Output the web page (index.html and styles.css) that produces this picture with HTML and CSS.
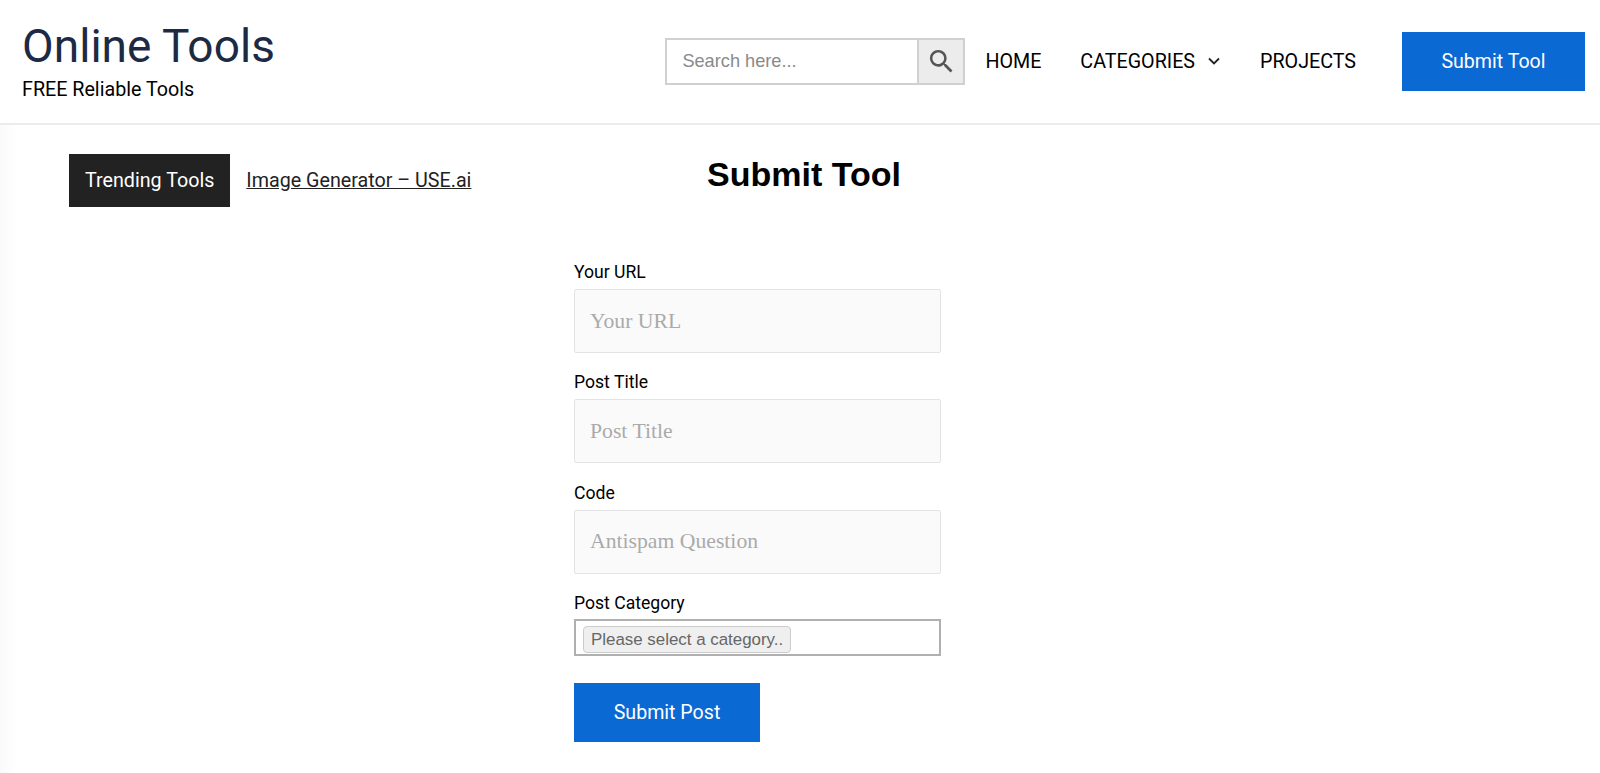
FILE: index.html
```html
<html>
  <head>
    <link rel="stylesheet" href="styles.css">
  </head>
  <body>
    <header class="site-header">
      <div class="brand">
        <div class="brand-title">Online Tools</div>
        <div class="brand-tagline">FREE Reliable Tools</div>
      </div>
      <nav class="nav">
        <form class="search">
          <input type="text" class="search-input" placeholder="Search here..." />
          <button type="button" class="search-button">
            <svg width="31" height="31" viewBox="0 0 24 24" fill="#555"><path d="M15.5 14h-.79l-.28-.27A6.47 6.47 0 0 0 16 9.5 6.5 6.5 0 1 0 9.5 16c1.61 0 3.09-.59 4.23-1.57l.27.28v.79l5 4.99L20.49 19l-4.99-5zm-6 0C7.01 14 5 11.99 5 9.5S7.01 5 9.5 5 14 7.01 14 9.5 11.99 14 9.5 14z"/></svg>
          </button>
        </form>
        <a class="nav-link" href="#">HOME</a>
        <a class="nav-link nav-categories" href="#">CATEGORIES
          <svg width="12" height="8" viewBox="0 0 12 8" fill="none" stroke="#222" stroke-width="1.8"><path d="M1 1.5l5 5 5-5"/></svg>
        </a>
        <a class="nav-link nav-projects" href="#">PROJECTS</a>
        <a class="btn btn-header" href="#">Submit Tool</a>
      </nav>
    </header>

    <div class="content">
      <div class="trending">
        <span class="trending-label">Trending Tools</span>
        <a class="trending-link" href="#">Image Generator – USE.ai</a>
      </div>
      <main class="main">
        <h1 class="page-title">Submit Tool</h1>
        <form class="post-form">
          <label for="url">Your URL</label>
          <input type="text" id="url" placeholder="Your URL" />
          <label for="title">Post Title</label>
          <input type="text" id="title" placeholder="Post Title" />
          <label for="code">Code</label>
          <input type="text" id="code" placeholder="Antispam Question" />
          <label>Post Category</label>
          <div class="select-box"><span class="select-chip">Please select a category..</span></div>
          <button type="button" class="btn btn-submit">Submit Post</button>
        </form>
      </main>
    </div>
  </body>
</html>
```

FILE: styles.css
```css
* {
  box-sizing: border-box;
}

body {
  margin: 0;
  height: 773px;
  overflow: hidden;
  font-family: Roboto, sans-serif;
  color: #000;
  background: #fff;
}

a {
  color: inherit;
  text-decoration: none;
}

.site-header {
  display: flex;
  justify-content: space-between;
  height: 125px;
  padding: 20px 15px 0 22px;
  border-bottom: 2px solid #ebebee;
}

.brand-title {
  font-size: 46px;
  line-height: 52px;
  color: #1e2a44;
  letter-spacing: 0.05px;
}

.brand-tagline {
  margin-top: 4px;
  font-size: 19.7px;
  line-height: 27px;
}

.nav {
  display: flex;
  align-items: center;
  height: 82px;
  font-size: 19.7px;
}

.search {
  display: flex;
  width: 300px;
  height: 47px;
  margin: 0 20px 0 0;
  border: 2px solid #d0d0d0;
}

.search-input {
  flex: 1;
  min-width: 0;
  padding: 0 15px;
  border: 0;
  font-family: "Liberation Sans", sans-serif;
  font-size: 18.2px;
}

.search-input::placeholder {
  color: #8a8a8a;
}

.search-button {
  display: flex;
  align-items: center;
  justify-content: center;
  width: 46px;
  padding: 0;
  border: 0;
  border-left: 2px solid #d0d0d0;
  background: #ececec;
}

.nav-categories {
  display: flex;
  align-items: center;
  gap: 13px;
  margin-left: 39px;
}

.nav-projects {
  margin-left: 40px;
}

.btn {
  display: flex;
  align-items: center;
  justify-content: center;
  border: 0;
  background: #0b69d4;
  color: #fff;
  font-family: Roboto, sans-serif;
  font-size: 19.6px;
}

.btn-header {
  width: 183px;
  height: 59px;
  margin-left: 46px;
}

.content {
  display: grid;
  grid-template-columns: 574px 1fr;
  background: linear-gradient(to right, #fafafa, #fff 18px);
  height: 648px;
}

.trending {
  display: flex;
  align-items: flex-start;
  gap: 16px;
  padding: 29px 0 0 69px;
  font-size: 19.7px;
}

.trending-label {
  padding: 0 16px;
  line-height: 53px;
  background: #222;
  color: #fff;
}

.trending-link {
  line-height: 53px;
  color: #222;
  text-decoration: underline;
}

.page-title {
  margin: 28px 0 0 133px;
  font-family: "Liberation Sans", sans-serif;
  font-size: 34px;
  line-height: 42px;
}

.post-form {
  display: flex;
  flex-direction: column;
  align-items: flex-start;
  width: 367px;
  margin-top: 64px;
}

.post-form label {
  font-size: 17.6px;
  line-height: 26px;
}

.post-form input {
  width: 100%;
  height: 64px;
  margin: 4px 0 16.4px;
  padding: 0 15px;
  border: 1px solid #e3e3e3;
  border-radius: 2px;
  background: #fafafa;
  font-family: "Liberation Serif", serif;
  font-size: 21.7px;
}

.post-form input::placeholder {
  color: #aaa;
}

.select-box {
  width: 100%;
  height: 37px;
  margin-top: 3px;
  padding: 5px 7px;
  border: 2px solid #b0b0b0;
}

.select-chip {
  display: inline-block;
  height: 27px;
  padding: 0 7px;
  border: 1px solid #ccc;
  border-radius: 4px;
  background: #efefef;
  color: #666;
  font-family: "Liberation Sans", sans-serif;
  font-size: 16.9px;
  line-height: 25px;
}

.btn-submit {
  width: 186px;
  height: 59px;
  margin-top: 27px;
}
```
